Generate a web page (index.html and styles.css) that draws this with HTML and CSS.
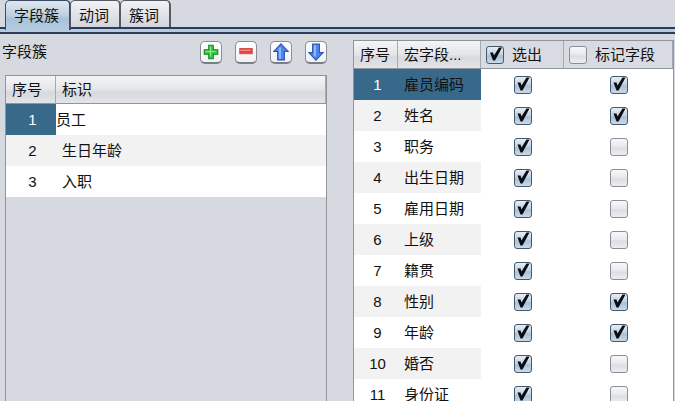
FILE: index.html
```html
<!DOCTYPE html>
<html lang="zh-CN">
<head>
<meta charset="utf-8">
<title>字段簇</title>
<link rel="stylesheet" href="styles.css">
</head>
<body>
<nav class="tabs" role="tablist">
  <button class="tab tab-active" role="tab" aria-selected="true">字段簇</button>
  <button class="tab" role="tab" aria-selected="false">动词</button>
  <button class="tab" role="tab" aria-selected="false">簇词</button>
</nav>
<main class="panels">
  <section class="clusters">
    <div class="toolbar">
      <h1 class="title">字段簇</h1>
      <button class="tool" aria-label="添加"><svg viewBox="0 0 16 16"><path d="M6 2h4v4h4v4h-4v4H6v-4H2V6h4z" fill="#39c945" stroke="#16862b"/><path d="M7.500 3v9M3 7.500h9" stroke="#8bf08c" fill="none"/></svg></button>
      <button class="tool" aria-label="删除"><svg viewBox="0 0 16 16"><path d="M2.500 5h11v4.500h-11z" fill="#e0453f" stroke="#d2504c"/><path d="M3 6.500h9" stroke="#f59a90"/></svg></button>
      <button class="tool" aria-label="上移"><svg viewBox="0 0 16 16"><path d="M8 .7 14.300 7.500H11V15H5V7.500H1.700z" fill="#4f86ee" stroke="#2c52b4"/><path d="M7 4v10" stroke="#8fb9fa" stroke-width="2"/></svg></button>
      <button class="tool" aria-label="下移"><svg viewBox="0 0 16 16"><path d="M8 15.300 14.300 8.500H11V1H5V8.500H1.700z" fill="#4f86ee" stroke="#2c52b4"/><path d="M7 2v10" stroke="#8fb9fa" stroke-width="2"/></svg></button>
    </div>
    <div class="frame cluster-frame">
      <table class="grid">
        <colgroup><col class="col-cluster-no"><col></colgroup>
        <thead><tr><th>序号</th><th>标识</th></tr></thead>
        <tbody>
          <tr><td class="no selected">1</td><td class="editing">员工</td></tr>
          <tr><td class="no">2</td><td>生日年龄</td></tr>
          <tr><td class="no">3</td><td>入职</td></tr>
        </tbody>
      </table>
    </div>
  </section>
  <section class="frame field-frame">
    <table class="grid fields">
      <colgroup><col class="col-no"><col class="col-name"><col class="col-pick"><col></colgroup>
      <thead><tr>
        <th>序号</th><th>宏字段...</th>
        <th class="check-head"><label><input type="checkbox" checked>选出</label></th>
        <th class="check-head"><label><input type="checkbox">标记字段</label></th>
      </tr></thead>
      <tbody>
        <tr><td class="no selected">1</td><td class="selected-name">雇员编码</td><td class="check"><input type="checkbox" aria-label="选出 雇员编码" checked></td><td class="check"><input type="checkbox" aria-label="标记字段 雇员编码" checked></td></tr>
        <tr><td class="no">2</td><td>姓名</td><td class="check"><input type="checkbox" aria-label="选出 姓名" checked></td><td class="check"><input type="checkbox" aria-label="标记字段 姓名" checked></td></tr>
        <tr><td class="no">3</td><td>职务</td><td class="check"><input type="checkbox" aria-label="选出 职务" checked></td><td class="check"><input type="checkbox" aria-label="标记字段 职务"></td></tr>
        <tr><td class="no">4</td><td>出生日期</td><td class="check"><input type="checkbox" aria-label="选出 出生日期" checked></td><td class="check"><input type="checkbox" aria-label="标记字段 出生日期"></td></tr>
        <tr><td class="no">5</td><td>雇用日期</td><td class="check"><input type="checkbox" aria-label="选出 雇用日期" checked></td><td class="check"><input type="checkbox" aria-label="标记字段 雇用日期"></td></tr>
        <tr><td class="no">6</td><td>上级</td><td class="check"><input type="checkbox" aria-label="选出 上级" checked></td><td class="check"><input type="checkbox" aria-label="标记字段 上级"></td></tr>
        <tr><td class="no">7</td><td>籍贯</td><td class="check"><input type="checkbox" aria-label="选出 籍贯" checked></td><td class="check"><input type="checkbox" aria-label="标记字段 籍贯"></td></tr>
        <tr><td class="no">8</td><td>性别</td><td class="check"><input type="checkbox" aria-label="选出 性别" checked></td><td class="check"><input type="checkbox" aria-label="标记字段 性别" checked></td></tr>
        <tr><td class="no">9</td><td>年龄</td><td class="check"><input type="checkbox" aria-label="选出 年龄" checked></td><td class="check"><input type="checkbox" aria-label="标记字段 年龄" checked></td></tr>
        <tr><td class="no">10</td><td>婚否</td><td class="check"><input type="checkbox" aria-label="选出 婚否" checked></td><td class="check"><input type="checkbox" aria-label="标记字段 婚否"></td></tr>
        <tr><td class="no">11</td><td>身份证</td><td class="check"><input type="checkbox" aria-label="选出 身份证" checked></td><td class="check"><input type="checkbox" aria-label="标记字段 身份证"></td></tr>
      </tbody>
    </table>
  </section>
</main>
</body>
</html>
```

FILE: styles.css
```css
* {
  box-sizing: border-box;
}

body {
  margin: 0;
  height: 100vh;
  overflow: hidden;
  display: flex;
  flex-direction: column;
  background: #d7d9e0;
  color: #111;
  font: 15px/20px "Liberation Sans", "Noto Sans CJK SC", sans-serif;
}

button {
  font: inherit;
  color: inherit;
  margin: 0;
}

/* Tab strip */
.tabs {
  display: flex;
  flex: none;
  height: 34px;
  padding: 0 5px 7px;
  background: linear-gradient(#d7d9e0 27px, #2d3c58 27px, #2d3c58 29px, #b5cbe2 29px, #b5cbe2 32px, #2d3c58 32px);
}

.tab {
  height: 27px;
  padding: 4px 10px 0 8px;
  margin-right: -1px;
  border: 2px solid #555a66;
  border-width: 1px 2px 0 1px;
  border-radius: 5px 5px 0 0;
  background: linear-gradient(#f2f2f5, #e2e4e9 50%, #d2d5dc);
}

.tab-active {
  height: 30px;
  padding-bottom: 3px;
  border-color: #3c4a66;
  background: linear-gradient(#e0e8f0, #bccfdf 50%, #a9c2d7 60%, #b5cbe2);
}

/* Panels */
.panels {
  flex: 1;
  min-height: 0;
  display: grid;
  grid-template-columns: 322fr 321fr;
  gap: 26px;
  padding: 6px 1px 0 5px;
}

.clusters {
  display: flex;
  flex-direction: column;
  min-height: 0;
}

.toolbar {
  display: flex;
  align-items: center;
  gap: 13px;
  flex: none;
  height: 24px;
  margin-bottom: 11px;
}

.title {
  flex: 1;
  margin: 0 0 0 -3px;
  font-size: 15px;
  font-weight: normal;
}

.tool {
  display: grid;
  place-items: center;
  width: 22px;
  height: 23px;
  padding: 0;
  border: 1px solid #8b8d95;
  border-bottom: 2px solid #7c7e86;
  border-radius: 5px;
  background: linear-gradient(#fff, #f0f1f5);
}

.tool svg {
  width: 18px;
  height: 18px;
}

/* Tables */
.frame {
  min-height: 0;
  overflow: hidden;
  border: 1px solid #8f949f;
  border-bottom: 0;
}

.cluster-frame {
  flex: 1;
}

.field-frame {
  background: #fff;
}

.grid {
  width: 100%;
  table-layout: fixed;
  border-collapse: separate;
  border-spacing: 0;
}

.col-cluster-no {
  width: 50px;
}

.col-no {
  width: 44px;
}

.col-name {
  width: 83px;
}

.col-pick {
  width: 83px;
}

th {
  height: 28px;
  padding: 0 0 0 6px;
  border-right: 1px solid #a5a9b3;
  border-bottom: 1px solid #8f949f;
  background: linear-gradient(#f5f5f6, #e4e5e8 50%, #d7d9de 60%, #e3e4e8);
  font-weight: normal;
  text-align: left;
  white-space: nowrap;
}

th.check-head {
  padding-left: 5px;
  background: #d9dbe2;
}

.check-head label {
  display: flex;
  align-items: center;
  gap: 8px;
}

td {
  height: 31px;
  padding: 0 0 0 6px;
  background: #fff;
  white-space: nowrap;
}

tr:nth-child(even) td {
  background: #f2f2f2;
}

.no {
  padding: 0 0 0 3px;
  text-align: center;
}

.editing {
  padding-left: 0;
}

.grid .selected,
.grid .selected-name {
  background: #39698a;
}

.selected {
  color: #fff;
}

tr:nth-child(n) .check {
  padding: 0 0 2px;
  background: #fff;
  text-align: center;
}

/* Check boxes */
input[type="checkbox"] {
  appearance: none;
  display: inline-block;
  position: relative;
  flex: none;
  width: 18px;
  height: 18px;
  margin: 0;
  border: 1px solid #8c8e96;
  border-radius: 3px;
  background: linear-gradient(#f8f8fa, #e7e8ed 50%, #dcdde4 55%, #ededf2);
  vertical-align: middle;
}

input[type="checkbox"]:checked {
  border-color: #44586f;
  background: linear-gradient(#e6eef5, #c0d0df 50%, #a9c0d4 55%, #cadbe9);
}

input[type="checkbox"]:checked::after {
  content: "";
  position: absolute;
  inset: 0;
  background: #080c14;
  clip-path: polygon(3px 6px, 6px 6px, 7px 9px, 12px 1px, 15px 1px, 8px 14px, 6px 14px);
}
```
